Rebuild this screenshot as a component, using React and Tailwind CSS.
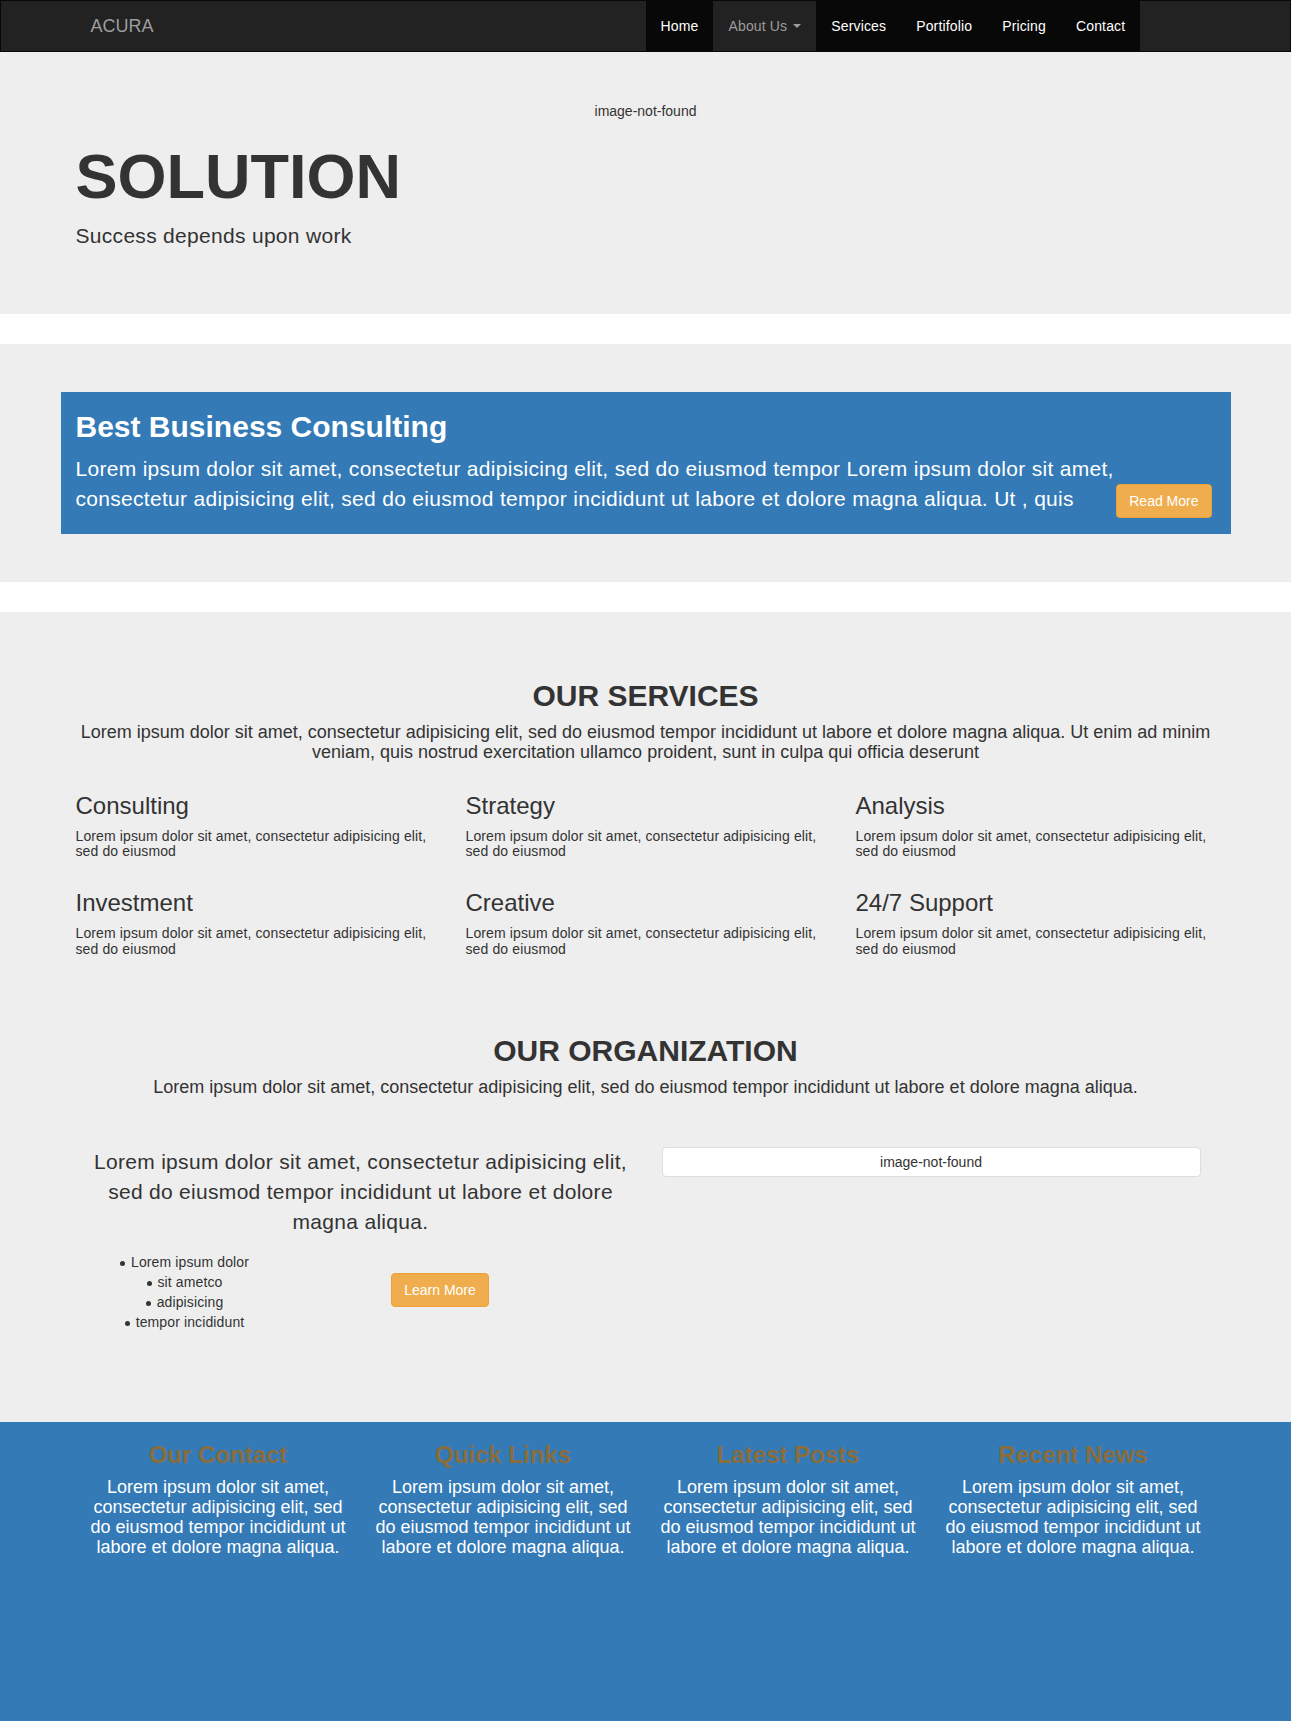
import React from 'react';

// Shared copy
const lorem = 'Lorem ipsum dolor sit amet, consectetur adipisicing elit, sed do eiusmod';

const services = ['Consulting', 'Strategy', 'Analysis', 'Investment', 'Creative', '24/7 Support'];

const footerCols = ['Our Contact', 'Quick Links', 'Latest Posts', 'Recent News'];

const navLinks = ['Services', 'Portifolio', 'Pricing', 'Contact'];

const listItems = ['Lorem ipsum dolor', 'sit ametco', 'adipisicing', 'tempor incididunt'];

// Top navbar
const Navbar = () => (
  <nav className="h-[52px] bg-[#222] border border-[#080808]">
    <div className="w-[1170px] mx-auto px-[15px] flex h-full">
      <div className="w-[570px] flex items-center">
        <a className="px-[15px] text-[18px] leading-[20px] text-[#9d9d9d]">ACURA</a>
      </div>
      <ul className="flex h-full bg-[#080808] text-[14px] tracking-[0.15px]">
        <li>
          <a className="block px-[15px] leading-[50px] text-white">Home</a>
        </li>
        <li className="bg-[#222]">
          <a className="flex items-center px-[15px] leading-[50px] text-[#9d9d9d]">
            About Us&nbsp;
            <span className="ml-[2px] w-0 h-0 border-t-[4px] border-t-[#9d9d9d] border-x-[4px] border-x-transparent" />
          </a>
        </li>
        {navLinks.map((link) => (
          <li key={link}>
            <a className="block px-[15px] leading-[50px] text-white">{link}</a>
          </li>
        ))}
      </ul>
    </div>
  </nav>
);

// Hero / jumbotron
const Hero = () => (
  <section className="bg-[#eee] h-[262px] pt-[49px]">
    <div className="w-[1170px] mx-auto px-[15px] text-[#333]">
      <div className="text-center text-[14px] leading-[20px]">image-not-found</div>
      <h1 className="mt-[21px] text-[63px] leading-[69.3px] font-bold">SOLUTION</h1>
      <p className="mt-[10px] text-[21px] leading-[30px] tracking-[0.3px]">Success depends upon work</p>
    </div>
  </section>
);

// Blue call-out box
const Banner = () => (
  <section className="mt-[30px] bg-[#eee] py-[48px]">
    <div className="w-[1170px] h-[142px] mx-auto bg-[#337ab7] text-white pt-[18px] pb-[20px] px-[15px]">
      <h2 className="text-[30px] leading-[33px] font-bold">Best Business Consulting</h2>
      <p className="mt-[11px] text-[21px] leading-[30px] tracking-[0.3px]">
        Lorem ipsum dolor sit amet, consectetur adipisicing elit, sed do eiusmod tempor Lorem ipsum dolor sit amet,
        consectetur adipisicing elit, sed do eiusmod tempor incididunt ut labore et dolore magna aliqua. Ut , quis
        <a className="float-right mr-[4px] px-[12px] py-[6px] text-[14px] leading-[20px] tracking-normal bg-[#f0ad4e] border border-[#eea236] rounded-[4px] text-white">
          Read More
        </a>
      </p>
    </div>
  </section>
);

// Services + organization
const Services = () => (
  <section className="mt-[30px] bg-[#eee] h-[810px] pt-[67px] text-[#333]">
    <div className="w-[1170px] mx-auto px-[15px]">
      <h2 className="text-center text-[30px] leading-[33px] font-bold">OUR SERVICES</h2>
      <h4 className="mt-[11px] text-center text-[18px] leading-[19.8px]">
        Lorem ipsum dolor sit amet, consectetur adipisicing elit, sed do eiusmod tempor incididunt ut labore et dolore
        magna aliqua. Ut enim ad minim veniam, quis nostrud exercitation ullamco proident, sunt in culpa qui officia
        deserunt
      </h4>

      <div className="mt-[10px] grid grid-cols-3 gap-x-[30px]">
        {services.map((s) => (
          <div key={s}>
            <h3 className="mt-[20px] text-[24px] leading-[26.4px]">{s}</h3>
            <h5 className="mt-[10px] mb-[10px] text-[14px] leading-[15.4px] tracking-[0.12px]">{lorem}</h5>
          </div>
        ))}
      </div>

      <h2 className="mt-[67px] text-center text-[30px] leading-[33px] font-bold">OUR ORGANIZATION</h2>
      <h4 className="mt-[11px] text-center text-[18px] leading-[19.8px]">
        Lorem ipsum dolor sit amet, consectetur adipisicing elit, sed do eiusmod tempor incididunt ut labore et dolore
        magna aliqua.
      </h4>

      <div className="mt-[49px] flex">
        <div className="w-[570px] shrink-0">
          <p className="text-center text-[21px] leading-[30px] tracking-[0.3px]">
            Lorem ipsum dolor sit amet, consectetur adipisicing elit, sed do eiusmod tempor incididunt ut labore et
            dolore magna aliqua.
          </p>
          <div className="mt-[15px] flex">
            <ul className="w-[229px] text-center text-[14px] leading-[20px] tracking-[0.12px]">
              {listItems.map((item) => (
                <li key={item}>
                  <span className="relative">
                    <span className="absolute left-[-11px] top-[7px] w-[5px] h-[5px] rounded-full bg-[#333]" />
                    {item}
                  </span>
                </li>
              ))}
            </ul>
            <div className="w-[271px] flex justify-center pt-[21px]">
              <a className="h-[34px] px-[12px] py-[6px] text-[14px] leading-[20px] bg-[#f0ad4e] border border-[#eea236] rounded-[4px] text-white">
                Learn More
              </a>
            </div>
          </div>
        </div>
        <div className="ml-[16px] w-[539px] h-[30px] bg-white border border-[#ddd] rounded-[4px] text-center text-[14px] leading-[28px]">
          image-not-found
        </div>
      </div>
    </div>
  </section>
);

// Footer
const Footer = () => (
  <footer className="bg-[#337ab7] h-[299px]">
    <div className="w-[1170px] mx-auto px-[15px] grid grid-cols-4">
      {footerCols.map((title) => (
        <div key={title} className="px-[10px] text-center">
          <h3 className="mt-[20px] text-[24px] leading-[26.4px] font-bold text-[#8a6d3b]">{title}</h3>
          <h4 className="mt-[10px] text-[18px] leading-[19.8px] text-white">
            Lorem ipsum dolor sit amet, consectetur adipisicing elit, sed do eiusmod tempor incididunt ut labore et
            dolore magna aliqua.
          </h4>
        </div>
      ))}
    </div>
  </footer>
);

const App = () => (
  <div className="font-['Liberation_Sans',Arial,Helvetica,sans-serif] bg-white min-h-[1721px]">
    <Navbar />
    <Hero />
    <Banner />
    <Services />
    <Footer />
  </div>
);

export default App;
